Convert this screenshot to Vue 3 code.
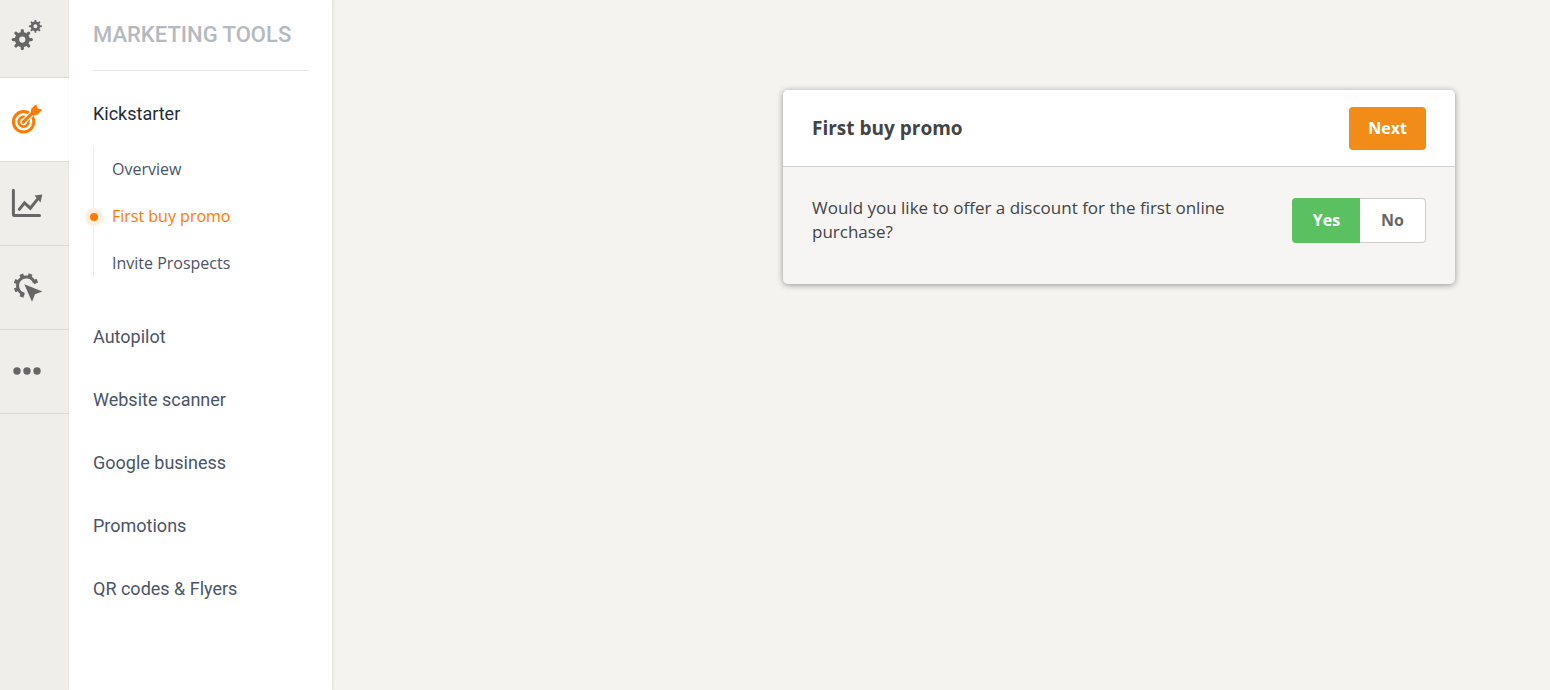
<script setup>
import { ref } from 'vue'

const teeth = [0, 45, 90, 135, 180, 225, 270, 315]
const cursorTeeth = [67, 22, 337, 292, 247, 202]

const subItems = ['Overview', 'First buy promo', 'Invite Prospects']
const activeSub = ref('First buy promo')
const sections = ['Autopilot', 'Website scanner', 'Google business', 'Promotions', 'QR codes & Flyers']
const answer = ref('yes')
</script>

<template>
  <div class="page">
    <nav class="rail" aria-label="Main">
      <a href="#" class="rail-item first" aria-label="Settings">
        <svg width="32" height="32" viewBox="0 0 32 32">
          <g fill="none" stroke="currentColor">
            <circle cx="11.3" cy="19.6" r="5.3" stroke-width="4.4" />
            <g stroke-width="3.2" stroke-linecap="round">
              <line v-for="a in teeth" :key="a" x1="11.3" y1="12.5" x2="11.3" y2="10.6" :transform="`rotate(${a} 11.3 19.6)`" />
            </g>
            <circle cx="24.4" cy="6.3" r="3.4" stroke-width="2.7" />
            <g stroke-width="1.9" stroke-linecap="round">
              <line v-for="a in teeth" :key="a" x1="24.4" y1="2" x2="24.4" y2="0.7" :transform="`rotate(${a} 24.4 6.3)`" />
            </g>
          </g>
        </svg>
      </a>
      <a href="#" class="rail-item active" aria-label="Marketing tools" aria-current="page">
        <svg width="32" height="32" viewBox="0 0 32 32">
          <g fill="none" stroke="currentColor">
            <circle cx="12.6" cy="17.8" r="10.2" stroke-width="3" />
            <circle cx="12.6" cy="17.8" r="4.8" stroke-width="2.8" />
            <path class="gap" d="M12.6 17.8 24 6.4" stroke-width="5.6" />
            <path d="M12.2 18.2 23 7.4" stroke-width="3.2" stroke-linecap="round" />
          </g>
          <path fill="currentColor" d="M19.6 9.4 20.4 4.4 25.2.3 26.6 4.4 31.2 5.4 26.6 10.4 22 11.8Z" />
        </svg>
      </a>
      <a href="#" class="rail-item" aria-label="Reports">
        <svg width="32" height="32" viewBox="0 0 32 32">
          <g fill="none" stroke="currentColor" stroke-width="3" stroke-linecap="round" stroke-linejoin="round">
            <path d="M2.4 2.2V26.2Q2.4 27.5 3.7 27.5H28.5" />
            <path d="M8.3 21.4 13.5 14.9 19.3 20.2 27 10.6" stroke-linejoin="miter" />
          </g>
          <path fill="currentColor" d="M23.5 7.5 31.3 6.4 29.5 14.5Z" />
        </svg>
      </a>
      <a href="#" class="rail-item" aria-label="Automation">
        <svg width="32" height="32" viewBox="0 0 32 32">
          <g fill="none" stroke="currentColor">
            <path d="M23.4 10.4A8.7 8.7 0 1 0 13 22" stroke-width="3" />
            <g stroke-width="4">
              <line v-for="a in cursorTeeth" :key="a" x1="15" y1="5.6" x2="15" y2="1.2" :transform="`rotate(${a} 15 13.5)`" />
            </g>
          </g>
          <path class="cursor" d="M13.3 12.2 31.4 19.4 24 22.2 21 29.8Z" />
        </svg>
      </a>
      <a href="#" class="rail-item" aria-label="More">
        <svg width="32" height="32" viewBox="0 0 32 32" fill="currentColor">
          <circle cx="6" cy="15" r="3.7" />
          <circle cx="16" cy="15" r="3.7" />
          <circle cx="26" cy="15" r="3.7" />
        </svg>
      </a>
    </nav>

    <aside class="sidebar">
      <h2>MARKETING TOOLS</h2>
      <nav aria-label="Marketing tools">
        <a href="#" class="section open">Kickstarter</a>
        <ul class="sub">
          <li v-for="item in subItems" :key="item">
            <a href="#" :class="{ current: item === activeSub }" @click.prevent="activeSub = item">{{ item }}</a>
          </li>
        </ul>
        <a v-for="s in sections" :key="s" href="#" class="section">{{ s }}</a>
      </nav>
    </aside>

    <main>
      <section class="card">
        <header>
          <h1>First buy promo</h1>
          <button type="button" class="next">Next</button>
        </header>
        <div class="question">
          <p id="question">Would you like to offer a discount for the first online purchase?</p>
          <div class="toggle" role="group" aria-labelledby="question">
            <button type="button" :class="{ on: answer === 'yes' }" :aria-pressed="answer === 'yes'" @click="answer = 'yes'">Yes</button>
            <button type="button" :class="{ on: answer === 'no' }" :aria-pressed="answer === 'no'" @click="answer = 'no'">No</button>
          </div>
        </div>
      </section>
    </main>
  </div>
</template>

<style>
body {
  background: #f4f3ef;
}
</style>

<style scoped>
* {
  box-sizing: border-box;
}
.page {
  display: flex;
  min-height: 100vh;
  font-family: 'Open Sans', 'Noto Sans', sans-serif;
  color: #444;
}
a {
  text-decoration: none;
}
.rail {
  flex: 0 0 69px;
  background: #efeeea;
}
.rail-item {
  display: block;
  padding: 26px 0 25px 11px;
  border-bottom: 1px solid #dcdbd8;
  color: #666;
}
.rail-item.first {
  padding-top: 20px;
}
.rail-item.active {
  background: #fff;
  color: #ff7a00;
}
.rail-item svg {
  display: block;
}
.gap {
  stroke: #fff;
}
.cursor {
  fill: currentColor;
  stroke: #efeeea;
  stroke-width: 3;
  paint-order: stroke;
}
.sidebar {
  flex: 0 0 263px;
  padding: 0 23px 0 24px;
  background: #fff;
  box-shadow: 1px 0 3px rgba(0, 0, 0, 0.1);
  font-family: Roboto, sans-serif;
}
h2 {
  margin: 0 0 21px;
  padding: 20px 0 21px;
  border-bottom: 1px solid #e4e5e7;
  font-size: 22px;
  line-height: 29px;
  font-weight: 500;
  color: #b5b9c0;
}
.section {
  display: block;
  margin-bottom: 19px;
  font-size: 18px;
  line-height: 44px;
  color: #4a5568;
}
.section.open {
  margin-bottom: 10px;
  color: #232b3a;
}
.sub {
  display: grid;
  gap: 12px;
  margin: 0 0 39px;
  padding: 6px 0 0;
  border-left: 1px solid #ececee;
  list-style: none;
  font-family: 'Open Sans', sans-serif;
  font-size: 16px;
  line-height: 35px;
}
.sub li:last-child {
  height: 30px;
}
.sub a {
  position: relative;
  display: block;
  padding-left: 18px;
  color: #4a5568;
}
.sub a.current {
  color: #ff7a00;
}
.sub a.current::before {
  content: '';
  position: absolute;
  left: -4px;
  top: 14px;
  width: 8px;
  height: 8px;
  border-radius: 50%;
  background: #ff7a00;
  box-shadow: 0 0 0 5px #ffefdf;
}
main {
  flex: 1;
  display: flex;
  justify-content: flex-end;
  align-items: flex-start;
  padding: 90px 95px 40px 40px;
}
.card {
  flex: 0 1 672px;
  border-radius: 5px;
  background: #f6f5f3;
  box-shadow: 0 1px 6px rgba(0, 0, 0, 0.4);
}
header {
  display: flex;
  align-items: center;
  justify-content: space-between;
  padding: 17px 29px 16px;
  border-bottom: 1px solid #d0d0ce;
  border-radius: 5px 5px 0 0;
  background: #fff;
}
h1 {
  margin: 0;
  padding-bottom: 2px;
  font-size: 19px;
  line-height: 24px;
  font-weight: 700;
}
button {
  border: 0;
  font: inherit;
  font-size: 16px;
  font-weight: 700;
  cursor: pointer;
}
.next {
  height: 43px;
  padding: 0 19px 2px;
  border-radius: 4px;
  background: #f18c19;
  color: #fff;
}
.question {
  display: flex;
  align-items: flex-start;
  justify-content: space-between;
  gap: 40px;
  padding: 31px 29px 40px;
}
p {
  margin: -2px 0 0;
  font-size: 17px;
  line-height: 24px;
}
.toggle {
  display: flex;
  margin-bottom: -1px;
}
.toggle button {
  height: 45px;
  padding: 0 0 2px;
  border: 1px solid #ccc;
  background: #fff;
  color: #666;
}
.toggle button:first-child {
  width: 68px;
  border-radius: 4px 0 0 4px;
  border-right: 0;
}
.toggle button:last-child {
  width: 66px;
  border-radius: 0 4px 4px 0;
  border-left: 0;
}
.toggle button.on {
  border-color: #5bc060;
  background: #5bc060;
  color: #fff;
}
</style>
